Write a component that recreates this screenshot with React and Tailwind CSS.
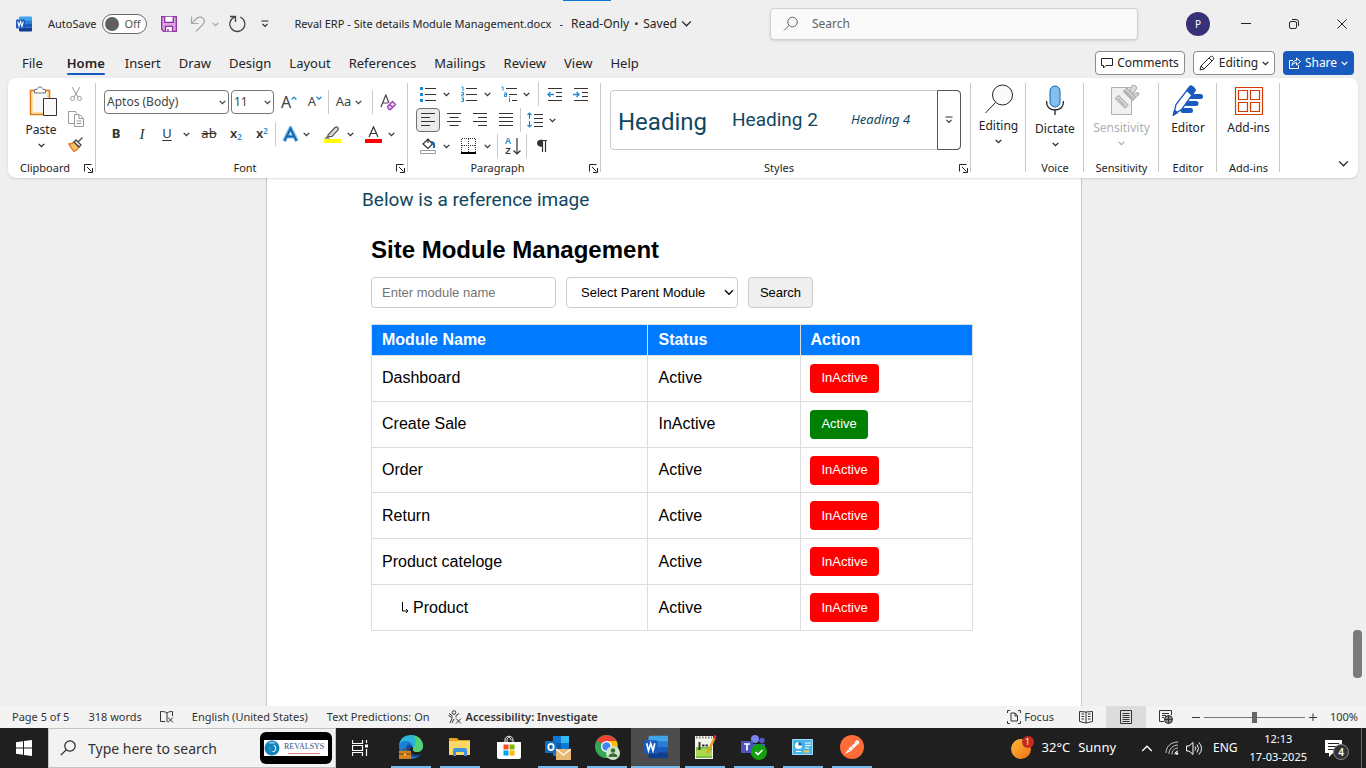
import { useState } from "react";

const TABS = [
  "Insert",
  "Draw",
  "Design",
  "Layout",
  "References",
  "Mailings",
  "Review",
  "View",
  "Help",
];

const MODULES = [
  { id: 1, name: "Dashboard", active: true },
  { id: 2, name: "Create Sale", active: false },
  { id: 3, name: "Order", active: true },
  { id: 4, name: "Return", active: true },
  { id: 5, name: "Product cateloge", active: true },
  { id: 6, name: "Product", active: true, child: true },
];

function Chevron({ className = "w-[7px]" }) {
  return (
    <svg viewBox="0 0 7 5" className={className} fill="none">
      <path
        d="M.7.9 3.5 3.7 6.3.9"
        stroke="currentColor"
        strokeWidth="1.3"
        vectorEffect="non-scaling-stroke"
      />
    </svg>
  );
}

function Icon({ size = 16, children, className = "" }) {
  return (
    <svg
      width={size}
      height={size}
      viewBox={`0 0 ${size} ${size}`}
      fill="none"
      stroke="currentColor"
      className={`shrink-0 ${className}`}
    >
      {children}
    </svg>
  );
}

function Tool({ label, className = "w-[26px]", children }) {
  return (
    <button
      aria-label={label}
      className={`flex h-6 shrink-0 items-center justify-center rounded hover:bg-gray-100 ${className}`}
    >
      {children}
    </button>
  );
}

function Drop({ label, className = "w-3" }) {
  return (
    <Tool label={`${label} options`} className={className}>
      <Chevron />
    </Tool>
  );
}

function Divider({ className = "" }) {
  return <span className={`h-6 w-px shrink-0 bg-[#c8c8c8] ${className}`} />;
}

function Group({ label, className = "", launcher, children }) {
  return (
    <section className={`relative flex shrink-0 flex-col ${className}`}>
      <div className="h-[82px]">{children}</div>
      <div className="flex h-4 items-center">
        <span className="flex-1 text-center text-[11px] leading-4">{label}</span>
        {launcher && (
          <button aria-label={`${label} settings`} className="mr-[2px] w-3">
            <Icon size={9} className="mx-auto">
              <path d="M.5 7.5v-7h7M3 3l4.5 4.5M8.5 4v4.5H4" />
            </Icon>
          </button>
        )}
      </div>
      <span className="absolute top-[5px] right-0 h-[89px] w-px bg-[#c8c8c8]" />
    </section>
  );
}

function WordLogo({ size = 16 }) {
  return (
    <svg width={size} height={size} viewBox="0 0 16 16">
      <path d="M3 1.5A1 1 0 0 1 4 .5h11a1 1 0 0 1 1 1V4.500H3z" fill="#41a5ee" />
      <path d="M3 4.300h13V8H3z" fill="#2b7cd3" />
      <path d="M3 8h13v3.700H3z" fill="#185abd" />
      <path d="M3 11.700h13v2.800a1 1 0 0 1-1 1H4a1 1 0 0 1-1-1z" fill="#103f91" />
      <rect y="3.500" width="9" height="9" rx="1" fill="#185abd" />
      <path d="m1.800 5.500 1.200 5 1.500-4.800 1.500 4.800 1.200-5" fill="none" stroke="#fff" strokeWidth="1.100" />
    </svg>
  );
}

function TitleBar() {
  const [autoSave, setAutoSave] = useState(false);

  return (
    <header className="relative flex h-12 shrink-0 items-center">
      <div className="absolute top-0 left-[563px] h-px w-12 bg-[#0b74d1]" />
      <div className="flex flex-1 items-center pl-4">
        <WordLogo />
        <label className="ml-4 flex items-center gap-[6px] text-[11px]">
          AutoSave
          <button
            role="switch"
            aria-checked={autoSave}
            onClick={() => setAutoSave(!autoSave)}
            className="flex h-5 w-[45px] items-center gap-[5px] rounded-full border border-[#6a6a6a] bg-white px-[2px] text-[11px] text-[#555]"
          >
            <span className="size-[14px] rounded-full bg-[#606060]" />
            {autoSave ? "On" : "Off"}
          </button>
        </label>
        <button aria-label="Save" className="ml-[14px]">
          <Icon className="text-[#8f2fa3]">
            <path d="M.7.7h14.600v14.600H2.700l-2-2z" fill="#dba3e2" strokeWidth="1.300" />
            <path d="M3.700.7v5.600h8.600V.7M4.500 15.300v-5h7v5" fill="#fff" strokeWidth="1.300" />
            <path d="M7 13v2.500" strokeWidth="1.500" />
          </Icon>
        </button>
        <button aria-label="Undo" className="ml-[13px] text-[#a6a6a6]">
          <Icon>
            <path d="M1.500.5v7h7M1.700 7.300 6 3C8.500.5 11.500.6 13 2.200c2 2 1.500 4.500-.5 6.600L6 15.500" strokeWidth="1.200" />
          </Icon>
        </button>
        <button aria-label="Undo history" className="ml-[6px] text-[#a6a6a6]">
          <Chevron />
        </button>
        <button aria-label="Redo" className="ml-[9px] text-[#444]">
          <Icon size={18}>
            <path d="M2 1.500h5.500V7M7.300 1.800A7.500 7.500 0 1 0 12 2" strokeWidth="1.300" />
          </Icon>
        </button>
        <button aria-label="Customize toolbar" className="ml-[15px]">
          <Icon size={8}>
            <path d="M.5 1h7M1.500 3.800 4 6.300l2.500-2.500" strokeWidth="1.200" />
          </Icon>
        </button>
        <button className="ml-[25px] flex items-center text-[11px] whitespace-pre">
          Reval ERP - Site details Module Management.docx
          <span className="px-2">-</span>
          <span className="text-[12px]">Read-Only</span>
          <span className="px-[5px]">•</span>
          <span className="text-[12px]">Saved</span>
          <Chevron className="ml-1 w-[11px]" />
        </button>
      </div>
      <label className="flex h-8 w-[368px] items-center rounded border border-[#d0d0d0] bg-[#fafafa] px-3 shadow-sm">
        <Icon className="text-[#666]">
          <circle cx="9.500" cy="6" r="4.800" />
          <path d="m6 9.500-5 5" />
        </Icon>
        <input
          placeholder="Search"
          aria-label="Search"
          className="ml-[13px] min-w-0 flex-1 bg-transparent text-[12px] outline-none placeholder:text-[#616161]"
        />
      </label>
      <div className="ml-9 flex">
        <button className="flex h-8 w-12 items-center justify-center">
          <span className="flex size-6 items-center justify-center rounded-full bg-[#373277] text-[10px] text-white">
            P
          </span>
        </button>
        <button aria-label="Minimize" className="flex w-12 items-center justify-center">
          <Icon size={10}>
            <path d="M0 4.500h10" />
          </Icon>
        </button>
        <button aria-label="Restore" className="flex w-12 items-center justify-center">
          <Icon size={10}>
            <rect x=".5" y="2.500" width="7" height="7" rx="1.500" />
            <path d="M3 .5h4a2.500 2.500 0 0 1 2.500 2.500v4" />
          </Icon>
        </button>
        <button aria-label="Close" className="flex w-12 items-center justify-center">
          <Icon size={10}>
            <path d="m.5.5 9 9m0-9-9 9" />
          </Icon>
        </button>
      </div>
    </header>
  );
}

function TabBar() {
  return (
    <nav className="flex h-[30px] shrink-0 items-center pr-3 pl-[22px] text-[13px] leading-5">
      <button className="mr-6">File</button>
      <button className="mr-5 flex flex-col font-semibold">
        <span className="mt-px leading-5">Home</span>
        <span className="h-[2px] w-full rounded bg-[#185abd]" />
      </button>
      <div className="flex flex-1 gap-[18px]">
        {TABS.map((tab) => (
          <button key={tab}>{tab}</button>
        ))}
      </div>
      <div className="flex gap-2">
        <button className="flex h-6 w-[90px] items-center justify-center gap-1 rounded border border-[#8a8a8a] bg-white text-[12px]">
          <Icon size={12}>
            <path d="M.5 1.500h11v7H5L2.500 11V8.500h-2z" />
          </Icon>
          Comments
        </button>
        <button className="flex h-6 w-[82px] items-center justify-center gap-1 rounded border border-[#8a8a8a] bg-white text-[12px]">
          <Icon>
            <path d="m1 15 1-4L11.500 1.500c1.500-1 4 1 3 3L5 14zM10 3l3 3M2 11l3 3" />
          </Icon>
          Editing
          <Chevron />
        </button>
        <button className="flex h-6 w-[71px] items-center justify-center gap-1 rounded bg-[#185abd] text-[12px] text-white">
          <Icon size={12}>
            <path d="M4 3.500H.5v8h9V8M3 8.500C3.300 5 5 3.500 7.500 3.500V1l4 3.500-4 3.500V5.700C5.500 5.700 4 6.500 3 8.500z" />
          </Icon>
          Share
          <Chevron />
        </button>
      </div>
    </nav>
  );
}

function ClipboardGroup() {
  return (
    <Group label="Clipboard" launcher className="w-[88px]">
      <div className="flex">
        <button className="flex w-[58px] flex-col items-center pt-2 pl-2 text-[12px]">
          <svg width="28" height="32" viewBox="0 0 28 32" fill="none" className="ml-1">
            <path d="M1.500 4.500h19v24h-19z" fill="#fbe3a6" stroke="#dd7a1a" strokeWidth="1.500" />
            <path d="M4 6h14v20H4z" fill="#f7f7f7" />
            <path d="M5.500 7V3.500H8C8 0 14 0 14 3.500h2.500V7z" fill="#fff" stroke="#777" />
            <path d="M14.500 12.500h13v17h-13z" fill="#fafafa" stroke="#333" />
          </svg>
          <span className="mt-1 leading-4">Paste</span>
          <Chevron className="mt-[5px] w-[7px]" />
        </button>
        <div className="flex flex-col gap-[1px] pt-1">
          <Tool label="Cut" className="w-5">
            <Icon className="text-[#999]">
              <path d="m4 1 6 10M12 1 6 11" />
              <circle cx="4.500" cy="12.500" r="2" />
              <circle cx="11.500" cy="12.500" r="2" />
            </Icon>
          </Tool>
          <Tool label="Copy" className="w-5">
            <Icon className="text-[#999]">
              <path d="M6 12.500H.5V.5h7l1 2" />
              <path d="M6.500 3.500h5l4 4v8h-9zM11 3.500v4h4M8.500 10h5M8.500 12.500h5" />
            </Icon>
          </Tool>
          <Tool label="Format painter" className="w-5">
            <Icon>
              <path d="M1 8c3 0 4-1 5-2l5 5c-1 2-2 3-5 4.300C4 13 2 11 1 8z" fill="#f8c072" stroke="#dd7a1a" strokeWidth="1.300" />
              <path d="m6 6 2-2 5 5-2 2zM10 6l4.500-4.500" stroke="#444" strokeWidth="1.300" />
            </Icon>
          </Tool>
        </div>
      </div>
    </Group>
  );
}

function ComboBox({ label, value, className }) {
  return (
    <div className={`relative h-6 ${className}`}>
      <select
        aria-label={label}
        className="block size-full appearance-none rounded border border-[#767676] bg-white pl-[2px] text-[12px]"
      >
        <option>{value}</option>
      </select>
      <Chevron className="pointer-events-none absolute top-[10px] right-[3px] w-[7px]" />
    </div>
  );
}

function FontGroup() {
  return (
    <Group label="Font" launcher className="w-[312px]">
      <div className="flex flex-col gap-2 pt-3 pl-2">
        <div className="flex items-center text-[#444]">
          <ComboBox label="Font" value="Aptos (Body)" className="w-[125px]" />
          <ComboBox label="Font size" value="11" className="ml-[2px] w-[43px]" />
          <Tool label="Increase font size" className="ml-[2px] w-[26px]">
            <span className="text-[16px]">A</span>
            <Chevron className="mb-[8px] w-[6px] rotate-180 text-[#1e8ad2]" />
          </Tool>
          <Tool label="Decrease font size">
            <span className="text-[13px]">A</span>
            <Chevron className="mb-[8px] w-[6px] text-[#1e8ad2]" />
          </Tool>
          <Divider />
          <Tool label="Change case" className="ml-[2px] w-9 gap-1">
            <span className="text-[13px]">Aa</span>
            <Chevron />
          </Tool>
          <Divider className="mx-[5px]" />
          <Tool label="Clear formatting" className="w-5">
            <Icon size={17}>
              <path d="M1 13 5.800 1 9 9M3 9h5" strokeWidth="1.200" />
              <path d="m7.500 12.500 5-5 3 3-5 5h-1.500zM9.500 10.500l3 3" stroke="#9b3fb0" strokeWidth="1.300" fill="#ecd3f1" />
            </Icon>
          </Tool>
        </div>
        <div className="flex items-center text-[13px] text-[#333]">
          <Tool label="Bold" className="w-6">
            <b>B</b>
          </Tool>
          <Tool label="Italic" className="ml-[2px] w-6 font-['Liberation_Serif',serif] text-[15px]">
            <i>I</i>
          </Tool>
          <Tool label="Underline">
            <u className="underline-offset-2">U</u>
          </Tool>
          <Drop label="Underline" />
          <Tool label="Strikethrough" className="ml-1 w-[26px]">
            <s>ab</s>
          </Tool>
          <Tool label="Subscript" className="ml-px w-[26px]">
            <span className="font-semibold">
              x<sub className="text-[8px] text-[#1e8ad2]">2</sub>
            </span>
          </Tool>
          <Tool label="Superscript">
            <span className="font-semibold">
              x<sup className="text-[8px] text-[#1e8ad2]">2</sup>
            </span>
          </Tool>
          <Divider className="mr-[2px]" />
          <Tool label="Text effects" className="w-6">
            <Icon size={17}>
              <path d="M2 15 8.500 2 15 15M5 10.500h7" stroke="#8cc5ee" strokeWidth="4" />
              <path d="M2.500 15 8.500 2.500 14.500 15M5 10.500h7" stroke="#1267b4" strokeWidth="2" />
            </Icon>
          </Tool>
          <Drop label="Text effects" className="-ml-[2px] w-3" />
          <Tool label="Highlight" className="ml-2 w-6">
            <Icon size={17}>
              <path d="m4 9 7-7.500c2-1.500 4 .5 3 2.500L8 10.500H4zM4 10.500 2 12h4" fill="#ddd" stroke="#555" strokeWidth="1.200" />
              <path d="M0 13h17v4H0z" fill="#ff0" stroke="none" />
            </Icon>
          </Tool>
          <Drop label="Highlight" />
          <Tool label="Font color" className="ml-[5px] w-6">
            <Icon size={17}>
              <path d="M4 11 8.500.8 13 11M5.500 7.500h6" strokeWidth="1.200" />
              <path d="M0 13h17v4H0z" fill="red" stroke="none" />
            </Icon>
          </Tool>
          <Drop label="Font color" />
        </div>
      </div>
    </Group>
  );
}

function ParagraphGroup() {
  return (
    <Group label="Paragraph" launcher className="w-[193px]">
      <div className="flex flex-col gap-[2px] pt-1 pl-2 text-[#333]">
        <div className="flex items-center">
          <Tool label="Bullets" className="w-6">
            <Icon>
              <path d="M5 2.500h11M5 8.500h11M5 14.500h11" />
              <path d="M0 1h3v3H0zM0 7h3v3H0zM0 13h3v3H0z" fill="#1e8ad2" stroke="none" />
            </Icon>
          </Tool>
          <Drop label="Bullets" />
          <Tool label="Numbering" className="ml-[5px] w-6">
            <Icon>
              <path d="M5 2.500h11M5 8.500h11M5 14.500h11" />
              <path d="M.5 1H2v4M.3 6.500H2.500v2H.8v1.500h2M.3 12h2.200v3.500H.3M1 13.700h1.500" stroke="#1e8ad2" />
            </Icon>
          </Tool>
          <Drop label="Numbering" />
          <Tool label="Multilevel list" className="ml-1 w-6">
            <Icon>
              <path d="M5 2.500h11M8 8.500h8M11 14.500h5" />
              <path d="M.5 1H2v3.500M3 7h2.500v3.500H3.500v-2h2M8.500 12v4M8.500 10v1" stroke="#1e8ad2" />
            </Icon>
          </Tool>
          <Drop label="Multilevel list" className="-ml-px w-3" />
          <Divider className="mr-[3px] ml-[6px]" />
          <Tool label="Decrease indent">
            <Icon>
              <path d="M1 2.500h14M9 6.500h6M9 10.500h6M1 14.500h14" />
              <path d="M7 8.500H1M3.500 6 1 8.500 3.500 11" stroke="#1e8ad2" strokeWidth="1.300" />
            </Icon>
          </Tool>
          <Tool label="Increase indent">
            <Icon>
              <path d="M1 2.500h14M9 6.500h6M9 10.500h6M1 14.500h14" />
              <path d="M0 8.500h6M3.500 6 6 8.500 3.500 11" stroke="#1e8ad2" strokeWidth="1.300" />
            </Icon>
          </Tool>
        </div>
        <div className="flex items-center">
          <Tool label="Align left" className="w-6 border border-[#707070] bg-[#ebebeb]">
            <Icon>
              <path d="M1 1.500h14M1 5.500h9M1 9.500h14M1 13.500h9" />
            </Icon>
          </Tool>
          <Tool label="Align center" className="ml-[2px] w-6">
            <Icon>
              <path d="M1 1.500h14M3.500 5.500h9M1 9.500h14M3.500 13.500h9" />
            </Icon>
          </Tool>
          <Tool label="Align right" className="ml-[2px] w-6">
            <Icon>
              <path d="M1 1.500h14M6 5.500h9M1 9.500h14M6 13.500h9" />
            </Icon>
          </Tool>
          <Tool label="Justify" className="ml-[2px] w-6">
            <Icon>
              <path d="M1 1.500h14M1 5.500h14M1 9.500h14M1 13.500h14" />
            </Icon>
          </Tool>
          <Divider className="mx-[2px]" />
          <Tool label="Line spacing" className="w-6">
            <Icon>
              <path d="M7 2.500h9M7 6.500h9M7 10.500h9M7 14.500h9" />
              <path d="M2.500 1v6M.5 3l2-2 2 2M2.500 9v6M.5 13l2 2 2-2" stroke="#1e8ad2" strokeWidth="1.200" />
            </Icon>
          </Tool>
          <Drop label="Line spacing" className="-ml-px w-3" />
        </div>
        <div className="flex items-center">
          <Tool label="Shading" className="w-6">
            <Icon>
              <path d="m3 6 5-5 4.500 5L8 10.500zM8 1v4" strokeWidth="1.200" />
              <path d="M11 4c3 0 3.500 2 3 6" stroke="#1267b4" strokeWidth="2" />
              <path d="M.5 12.500h15v3H.5z" stroke="#999" />
            </Icon>
          </Tool>
          <Drop label="Shading" />
          <Tool label="Borders" className="ml-[5px] w-6">
            <Icon>
              <path d="M1 .5h14M.5 1v13M14.500 1v13M7.500 1v13M1 7.500h14" strokeDasharray="1 1" />
              <path d="M0 15h15" strokeWidth="2" stroke="#000" />
            </Icon>
          </Tool>
          <Drop label="Borders" />
          <Divider className="mx-1" />
          <Tool label="Sort" className="w-[22px] gap-[2px]">
            <span className="flex flex-col font-['Liberation_Sans',Arial,sans-serif] text-[9px] leading-[10px] font-bold">
              <span className="text-[#1e8ad2]">A</span>
              <span>Z</span>
            </span>
            <svg width="8" height="17" viewBox="0 0 8 17" fill="none" stroke="currentColor">
              <path d="M4 0v16M.5 12.500 4 16l3.500-3.500" strokeWidth="1.200" />
            </svg>
          </Tool>
          <Divider className="mr-[2px] ml-[2px]" />
          <Tool label="Show paragraph marks">
            <Icon size={14}>
              <path d="M12 1.500H6M7.500 1v12M10.500 1v12" strokeWidth="1.200" />
              <path d="M7.500 1.200H5.500a3 3 0 0 0 0 6h2z" fill="currentColor" />
            </Icon>
          </Tool>
        </div>
      </div>
    </Group>
  );
}

function BigTool({ label, drop, className = "pt-[6px]", children }) {
  return (
    <button className={`flex w-full flex-col items-center text-[12px] ${className}`}>
      {children}
      <span className="mt-1 leading-4">{label}</span>
      {drop && <Chevron className="mt-[5px] w-[7px]" />}
    </button>
  );
}

function Ribbon() {
  return (
    <div className="z-10 mx-2 flex h-[100px] shrink-0 rounded-lg bg-white shadow">
      <ClipboardGroup />
      <FontGroup />
      <ParagraphGroup />
      <Group label="Styles" launcher className="w-[370px]">
        <div className="pt-3 pr-[10px] pl-[9px]">
          <div className="flex h-[60px] items-center rounded border border-[#c8c8c8] pl-[7px] font-[Roboto,sans-serif] text-[#0f4761]">
            <button className="w-[114px] pt-1 text-left text-[24px]">Heading</button>
            <button className="w-[119px] text-left text-[19px]">Heading 2</button>
            <button className="flex-1 text-left font-['Noto_Sans',sans-serif] text-[13px] italic">
              Heading 4
            </button>
            <button
              aria-label="More styles"
              className="-mr-px flex h-[60px] w-6 items-center justify-center rounded-r border border-[#555] text-[#333]"
            >
              <Icon size={8}>
                <path d="M.5 1h7M1.500 3.800 4 6.300l2.500-2.500" strokeWidth="1.200" />
              </Icon>
            </button>
          </div>
        </div>
      </Group>
      <Group label="" className="w-[55px]">
        <BigTool label="Editing" drop>
          <Icon size={30}>
            <circle cx="18.500" cy="11" r="10" fill="#fafafa" />
            <path d="M11.500 18.500 1.500 29" />
          </Icon>
        </BigTool>
      </Group>
      <Group label="Voice" className="w-[58px]">
        <BigTool label="Dictate" drop className="pt-[7px]">
          <Icon size={32}>
            <rect x="11" y="1" width="10" height="21" rx="5" fill="#83beec" stroke="#1267b4" />
            <path d="M7.500 16c0 6 3 9 8.500 9s8.500-3 8.500-9M16 25v5" strokeWidth="1.300" />
          </Icon>
        </BigTool>
      </Group>
      <Group label="Sensitivity" className="w-[75px]">
        <BigTool label="Sensitivity" drop className="pt-[6px] text-[#b0b0b0]">
          <Icon size={32} className="ml-1">
            <path d="M3.500 3.500h20v27h-20z" fill="#f0f0f0" />
            <path d="m7.500 14.500 3-3 9.500 9.500-3 3zM10 14.500l7 7" fill="#e4e4e4" strokeWidth="1.200" />
            <path d="m15.500 7.500 3.500-3.500 9 9-3.500 3.500zM17.500 7.500l7 7" fill="#ccc" strokeWidth="1.200" />
            <path d="m22 7 2-5q1.500-1.500 3.500 0t.5 3.500L25 10zM26.500 10.500l3-2 1.500 1.500-2.500 2.500" fill="#ddd" strokeWidth="1.200" />
          </Icon>
        </BigTool>
      </Group>
      <Group label="Editor" className="w-[58px]">
        <BigTool label="Editor">
          <Icon size={32} className="text-[#185abd]">
            <path d="M19 12.500h9.500M15 19.500h9M11 26.500h7.500" strokeWidth="5" strokeLinecap="round" />
            <path d="M1.500 31 4 20.500 17.500 3l5.500 4L10 25z" fill="#fff" strokeWidth="1.300" />
            <path d="m14.500 6.500 4-5q3 .5 5 4l-4 5.500zM1 31.500l1.500-5.500L6 28.500z" fill="#185abd" />
          </Icon>
        </BigTool>
      </Group>
      <Group label="Add-ins" className="w-[63px]">
        <BigTool label="Add-ins">
          <Icon size={32} className="text-[#d83b01]">
            <path d="M2.500 3.500h27v27h-27zM5.500 6.500h9v9h-9zM17.500 6.500h9v9h-9zM5.500 18.500h9v9h-9zM17.500 18.500h9v9h-9z" strokeWidth="1.200" />
          </Icon>
        </BigTool>
      </Group>
      <button aria-label="Collapse ribbon" className="mt-auto mr-2 mb-[10px] ml-auto px-px">
        <Chevron className="w-[11px]" />
      </button>
    </div>
  );
}

function ModuleTable() {
  const [modules, setModules] = useState(MODULES);

  const toggleModule = (id) => {
    setModules(
      modules.map((item) =>
        item.id === id ? { ...item, active: !item.active } : item
      )
    );
  };

  return (
    <table className="mt-4 h-[307px] w-full border-collapse text-left text-[16px] leading-5 text-black">
      <thead>
        <tr className="h-[31px] bg-[#007bff] text-white">
          <th className="w-[46%] border border-[#ddd] px-[10px]">Module Name</th>
          <th className="w-[153px] border border-[#ddd] px-[10px]">Status</th>
          <th className="border border-[#ddd] px-[9px]">Action</th>
        </tr>
      </thead>
      <tbody>
        {modules.map((item) => (
          <tr key={item.id}>
            <td className="border border-[#ddd] px-[10px]">
              {item.child ? (
                <span className="flex items-center gap-1 pl-[19px]">
                  <Icon size={8} className="h-3">
                    <path d="M1.500-2v9h5M5 5l2 2-2 2" />
                  </Icon>
                  {item.name}
                </span>
              ) : (
                item.name
              )}
            </td>
            <td className="border border-[#ddd] px-[10px]">
              {item.active ? "Active" : "InActive"}
            </td>
            <td className="border border-[#ddd] px-[9px]">
              <button
                onClick={() => toggleModule(item.id)}
                className={`block h-[29px] rounded px-[11px] text-[13px] text-white ${
                  item.active ? "bg-[#ff0000]" : "bg-[#008000]"
                }`}
              >
                {item.active ? "InActive" : "Active"}
              </button>
            </td>
          </tr>
        ))}
      </tbody>
    </table>
  );
}

function Document() {
  return (
    <main className="flex min-h-0 flex-1 overflow-hidden">
      <div className="mx-auto w-[816px] border-x border-[#c6c6c6] bg-white pt-2 pl-[95px]">
        <p className="font-[Roboto,sans-serif] text-[19px] leading-7 text-[#0f4761]">
          Below is a reference image
        </p>
        <div className="ml-[9px] w-[602px] pt-5 font-['Liberation_Sans',Arial,sans-serif]">
          <h2 className="text-[24px] leading-8 font-bold text-black">
            Site Module Management
          </h2>
          <form
            className="mt-[11px] flex gap-[10px] text-[13px] text-black"
            onSubmit={(e) => e.preventDefault()}
          >
            <input
              placeholder="Enter module name"
              aria-label="Module name"
              className="h-[31px] w-[185px] rounded border border-[#ccc] px-[10px] placeholder:text-[#757575]"
            />
            <div className="relative">
              <select
                aria-label="Parent module"
                className="block h-[31px] w-[172px] appearance-none rounded border border-[#ccc] bg-white pl-[14px]"
              >
                <option>Select Parent Module</option>
              </select>
              <Chevron className="pointer-events-none absolute top-3 right-1 w-[10px]" />
            </div>
            <button className="h-[31px] w-[65px] rounded border border-[#ccc] bg-[#efefef]">
              Search
            </button>
          </form>
          <ModuleTable />
        </div>
      </div>
      <div className="flex w-[18px] flex-col items-center justify-end pb-7">
        <div className="h-12 w-[9px] rounded bg-[#7a7a7a]" />
      </div>
    </main>
  );
}

function StatusBar() {
  return (
    <footer className="flex h-[22px] shrink-0 items-center bg-[#f3f3f3] pr-2 pl-3 text-[11px] text-[#333]">
      <span>Page 5 of 5</span>
      <span className="ml-[19px]">318 words</span>
      <button aria-label="Proofing" className="ml-[18px]">
        <Icon size={14}>
          <path d="M7 3v9M7 3C5 1.500 3 1.500.5 1.500v10H5M7 3c2-1.500 4-1.500 5.500-1.500V6M8 7.500l5 5m0-5-5 5" />
        </Icon>
      </button>
      <span className="ml-[18px]">English (United States)</span>
      <span className="ml-[19px]">Text Predictions: On</span>
      <button className="ml-[18px] flex items-center gap-1 font-semibold">
        <Icon size={14}>
          <circle cx="6" cy="2.500" r="1.800" />
          <path d="M1 3.500 4 5.500v3L2 13M11 3.500 8 5.500v2M.5 5.500 3 7M4 13l2-4M8 8.500l5 5m0-5-5 5" />
        </Icon>
        Accessibility: Investigate
      </button>
      <button className="ml-auto flex items-center gap-[3px]">
        <Icon size={14}>
          <path d="M3 .5H.5V3M11 .5h2.500V3M3 13.500H.5V11M11 13.500h2.500V11M4 3h4l2.500 2.500V11H4zM8 3v3h2.500" />
        </Icon>
        Focus
      </button>
      <button aria-label="Read mode" className="ml-3 flex h-full w-10 items-center justify-center">
        <Icon size={14}>
          <path d="M7 2v11M7 2 .5 1.500v10L7 13l6.500-1.500v-10zM2.500 4H5M2.500 6.500H5M2.500 9H5M9 4h2.500M9 6.500h2.500M9 9h2.500" />
        </Icon>
      </button>
      <button aria-label="Print layout" className="flex h-full w-10 items-center justify-center bg-[#dcdcdc]">
        <Icon size={14}>
          <path d="M1.500.5h11v13h-11zM3.500 3.500h7M3.500 5.500h7M3.500 7.500h7M3.500 9.500h7M3.500 11.500h7" />
        </Icon>
      </button>
      <button aria-label="Web layout" className="flex h-full w-10 items-center justify-center">
        <Icon size={14}>
          <path d="M5 11.500H.5V.5h12V5M3 3.500h7M3 5.500h4M3 7.500h2" />
          <circle cx="9.500" cy="9.500" r="4" fill="#888" stroke="#333" />
          <path d="M5.500 9.500h8M9.500 5.500v8" />
        </Icon>
      </button>
      <button aria-label="Zoom out" className="ml-[6px] w-2">
        <Icon size={8}>
          <path d="M0 4.500h8" />
        </Icon>
      </button>
      <input
        type="range"
        aria-label="Zoom"
        min="10"
        max="190"
        defaultValue="100"
        className="mx-1 h-[11px] w-[101px] appearance-none bg-[linear-gradient(#777,#777)] bg-[length:100%_1px] bg-center bg-no-repeat [&::-webkit-slider-thumb]:h-[11px] [&::-webkit-slider-thumb]:w-[5px] [&::-webkit-slider-thumb]:appearance-none [&::-webkit-slider-thumb]:bg-[#666]"
      />
      <button aria-label="Zoom in" className="w-2">
        <Icon size={8}>
          <path d="M0 4.500h8M4 .5v8" />
        </Icon>
      </button>
      <span className="ml-[13px]">100%</span>
    </footer>
  );
}

function AppButton({ label, running = true, selected, children }) {
  return (
    <button
      aria-label={label}
      className={`flex h-full w-[49px] flex-col items-center ${
        selected ? "bg-[#4c4c4c]" : ""
      }`}
    >
      <span className="flex flex-1 items-center justify-center">{children}</span>
      {running && (
        <span
          className={`h-[2px] bg-[#76b9ed] ${selected ? "w-full" : "w-10"}`}
        />
      )}
    </button>
  );
}

function AppIcon({ children }) {
  return (
    <svg width="26" height="26" viewBox="0 0 26 26" fill="none">
      {children}
    </svg>
  );
}

function PinnedApps() {
  return (
    <div className="ml-[2px] flex h-full">
      <AppButton label="Edge">
        <AppIcon>
          <path d="M1 13C1 5 6 1 13 1s12 5 12 11c0 4-3 6-6.500 6-2.500 0-4-1.500-3.500-3 .5-4-6-6-9-1z" fill="#2cb5dc" />
          <path d="M15 1.200C21 2 25 6.500 25 12c0 4-3 6-6.500 6-2.500 0-4-1.500-3.500-3 2-3 5-7 0-13.800z" fill="#52d273" />
          <path d="M1 13c0-5 4-6 7-6 4 0 7 2.500 7 6-4-3-7 3-3 7 3 3 7 3 10 1-6 7-21 4-21-8z" fill="#1a7fd6" />
          <path d="M9 11c-2.500 6 2 12 8 12 3 0 5-1 6.500-3-5 2-11 1-11.500-4 0-2 1-3 2-3.500-2-2-4-2.500-5-1.500z" fill="#0e4d9c" />
          <path d="M1 17h12v8H1z" fill="#d28220" />
          <path d="M1 20h12M5 17v-2h4v2" stroke="#7a3e05" />
          <path d="M6 19.500h2v2H6z" fill="#ffd36b" />
        </AppIcon>
      </AppButton>
      <AppButton label="File Explorer">
        <AppIcon>
          <path d="M2 4h8l2 2h11v15H2z" fill="#e3a21a" />
          <path d="M2 7h21v14H2z" fill="#ffd768" />
          <path d="M6 22v-6q0-2 2-2h10q2 0 2 2v6h-3v-4H9v4z" fill="#3b94dc" />
        </AppIcon>
      </AppButton>
      <AppButton label="Store" running={false}>
        <AppIcon>
          <path d="M9 7V5c0-5 8-5 8 0v2M11 7V5.500c0-4 4-4 4 0" stroke="#fff" strokeWidth="1" />
          <path d="M1 7h24v15q0 2-2 2H3q-2 0-2-2z" fill="#fff" />
          <path d="M7.500 9.500h5v5h-5z" fill="#f25022" />
          <path d="M13.500 9.500h5v5h-5z" fill="#7fba00" />
          <path d="M7.500 15.500h5v5h-5z" fill="#00a4ef" />
          <path d="M13.500 15.500h5v5h-5z" fill="#ffb900" />
        </AppIcon>
      </AppButton>
      <AppButton label="Outlook">
        <AppIcon>
          <path d="M8 2h16v20H8z" fill="#0f78d4" />
          <path d="M16 2h8v7h-8z" fill="#35b8f1" />
          <path d="M8 9h8v6H8z" fill="#0a5aa8" />
          <path d="M0 7h12v12H0z" fill="#0f6cbd" />
          <ellipse cx="6" cy="13" rx="2.700" ry="3.200" stroke="#fff" strokeWidth="1.800" />
          <path d="M11 15h15v11H11z" fill="#eab676" />
          <path d="m11 15 7.500 6 7.500-6" stroke="#fff" strokeWidth="1.300" />
        </AppIcon>
      </AppButton>
      <AppButton label="Chrome">
        <AppIcon>
          <circle cx="12.500" cy="12.500" r="11.500" fill="#34a853" />
          <path d="M2.500 7A11.500 11.500 0 0 1 22.500 7L12.500 12.500z" fill="#ea4335" />
          <path d="M2.500 7 8 16l4.500-5z" fill="#34a853" />
          <path d="M12.500 7h10c3 7-1 17-10 17l5-9z" fill="#fbbc04" />
          <circle cx="12.500" cy="12.500" r="5.500" fill="#fff" />
          <circle cx="12.500" cy="12.500" r="4.200" fill="#4285f4" />
          <circle cx="19" cy="19" r="7" fill="#cfe6c8" />
          <circle cx="19" cy="16.500" r="2.300" fill="#3f6b3a" />
          <path d="M14.500 23c0-5 9-5 9 0z" fill="#3f6b3a" />
        </AppIcon>
      </AppButton>
      <AppButton label="Word" selected>
        <WordLogo size={24} />
      </AppButton>
      <AppButton label="Notepad++">
        <AppIcon>
          <path d="M3 2h18v23H3z" fill="#f4f4ee" />
          <path d="M4 13h16v11H4z" fill="#7ac143" />
          <path d="M4 17q8-5 16 0v5H4z" fill="#a9d94f" />
          <path d="M4 3.500h16" stroke="#777" strokeWidth="2" strokeDasharray="1.500 1.500" />
          <path d="M7.500 8v8M10 11.500h2.500M13.500 11.500H16" stroke="#333" strokeWidth="2" />
          <path d="m15.500 19 7-15" stroke="#e2a21b" strokeWidth="2.500" />
          <path d="m22 4.500 1.500-3" stroke="#d34" strokeWidth="2.500" />
        </AppIcon>
      </AppButton>
      <AppButton label="Teams">
        <AppIcon>
          <circle cx="14" cy="5" r="4" fill="#7b83eb" />
          <circle cx="21" cy="6.500" r="2.700" fill="#5059c9" />
          <path d="M9 10h15v7q-3 6-8 6-7 0-7-7z" fill="#5059c9" />
          <path d="M0 7h12v12H0z" fill="#4b53bc" />
          <path d="M3 10h6M6 10v6.500" stroke="#fff" strokeWidth="1.700" />
          <circle cx="18" cy="18" r="8" fill="#13a10e" />
          <path d="m14.500 18 2.500 2.500 4.500-4.500" stroke="#fff" strokeWidth="1.700" />
        </AppIcon>
      </AppButton>
      <AppButton label="Control Panel">
        <AppIcon>
          <path d="M2.500 5.500h20v15h-20z" fill="#49b4ea" stroke="#9bdcfa" />
          <circle cx="8.500" cy="11.500" r="3.500" fill="#fff" />
          <path d="M8.500 11.500V8A3.500 3.500 0 0 1 12 11.500z" fill="#0f6cbd" />
          <path d="M15 9h6M15 11.500h6M15 14h4M6 17.500h5" stroke="#fff" />
          <path d="M13.500 17.500h6" stroke="#f5c84c" strokeWidth="2" />
        </AppIcon>
      </AppButton>
      <AppButton label="Postman">
        <AppIcon>
          <circle cx="13" cy="13" r="12" fill="#ff6c37" />
          <path d="m6 20 4-6 6-5 2 2-6 6z" fill="#fff" />
          <path d="m12 12 3 3M9 15l2 2" stroke="#ff6c37" strokeWidth=".7" />
          <circle cx="18" cy="8.500" r="2.200" fill="#fff" />
        </AppIcon>
      </AppButton>
    </div>
  );
}

function Taskbar() {
  return (
    <div className="flex h-10 shrink-0 items-center bg-[#1f1f1f] text-white">
      <button aria-label="Start" className="flex h-full w-12 items-center justify-center">
        <svg width="16" height="16" viewBox="0 0 16 16" fill="#fff">
          <path d="M0 2.200 7 1.200v6.300H0zM8 1l8-1v7.500H8zM0 8.500h7v6.300l-7-1zM8 8.500h8V16l-8-1z" />
        </svg>
      </button>
      <label className="flex h-full w-72 items-center border border-[#c4c4c4] bg-[#f2f2f2] pr-[3px] pl-[11px] text-[#222]">
        <Icon>
          <circle cx="10" cy="6" r="5.200" strokeWidth="1.200" />
          <path d="M6.200 9.800.8 15.200" strokeWidth="1.200" />
        </Icon>
        <input
          aria-label="Type here to search"
          placeholder="Type here to search"
          className="ml-3 w-0 flex-1 bg-transparent text-[14px] outline-none placeholder:text-[#333]"
        />
        <span className="flex h-8 w-[72px] items-center rounded-md bg-black px-1">
          <span className="flex h-4 w-full items-center overflow-hidden bg-white">
            <svg width="17" height="16" viewBox="0 0 17 16" className="shrink-0">
              <circle cx="8" cy="8" r="7.500" fill="#1482bd" />
              <path d="M4 3q4-2 8 0-4 1-8 0z" fill="#a8dcf4" />
              <path d="M5 6q1 7 5 5 3-3-1-6 4 0 3 5-4 6-7-4z" fill="#fff" />
            </svg>
            <span className="ml-[3px] flex flex-col font-['Liberation_Serif',serif]">
              <span className="text-[8px] leading-[9px] text-[#2d4f93]">REVALSYS</span>
              <span className="mx-1 mt-[2px] h-px bg-[#d98080]" />
            </span>
          </span>
        </span>
      </label>
      <button aria-label="Task view" className="flex h-full w-12 items-center justify-center">
        <Icon>
          <path d="M.5 0v3.500h10V0M.5 5.500h10v5H.5zM.5 16v-3.500h10V16M14.500 0v3M14.500 9v7" strokeWidth="1.200" />
          <path d="M13 4.500h3v3h-3z" fill="#fff" stroke="none" />
        </Icon>
      </button>
      <PinnedApps />
      <div className="ml-auto flex h-full items-center">
        <button className="flex items-center text-[13px]">
          <span className="relative mr-[9px] size-[22px]">
            <span className="absolute top-[2px] left-0 size-5 rounded-full bg-linear-to-br from-[#f8b83a] to-[#f0710f]" />
            <span className="absolute -top-[1px] left-[11px] flex size-3 items-center justify-center rounded-full bg-[#c42b1c] text-[8px]">
              1
            </span>
          </span>
          32°C<span className="ml-2">Sunny</span>
        </button>
        <button aria-label="Hidden icons" className="ml-[25px]">
          <Chevron className="w-3 rotate-180" />
        </button>
        <button aria-label="Network" className="ml-3">
          <Icon size={14}>
            <path d="M1 12C1 5.500 6 1 13 1M4 13c0-5 4-9 9-9M7 13.500c0-4 2.500-6.500 6-6.500" stroke="#ccc" />
            <path d="M10 13.500c0-2 1-3.500 3-3.500" />
            <circle cx="12" cy="12.500" r="1.300" fill="#fff" stroke="none" />
          </Icon>
        </button>
        <button aria-label="Volume" className="ml-[7px]">
          <Icon size={17}>
            <path d="M.5 6v5H3l4 3.500v-12L3 6zM9 6.500q1.500 2 0 4M11 4.500q3 4 0 8M13 2.500q5 6 0 12" />
          </Icon>
        </button>
        <span className="ml-[10px] text-[12px]">ENG</span>
        <div className="ml-3 flex flex-col text-center text-[11px] leading-[18px]">
          <span>12:13</span>
          <span>17-03-2025</span>
        </div>
        <button aria-label="Notifications" className="relative ml-[18px] size-6">
          <svg width="17" height="17" viewBox="0 0 17 17" fill="#fff">
            <path d="M0 0h17v13H8l-4 4v-4H0z" />
            <path d="M3 3.500h11M3 6.500h11M3 9.500h8" stroke="#1f1f1f" />
          </svg>
          <span className="absolute top-2 left-2 flex size-4 items-center justify-center rounded-full border border-[#888] bg-[#333] text-[10px] font-semibold">
            4
          </span>
        </button>
        <span className="mr-1 ml-3 h-full w-px bg-[#666]" />
      </div>
    </div>
  );
}

export default function App() {
  return (
    <div className="flex h-screen flex-col overflow-hidden bg-[#efefef] font-['Noto_Sans',sans-serif] text-[#242424]">
      <TitleBar />
      <TabBar />
      <Ribbon />
      <Document />
      <StatusBar />
      <Taskbar />
    </div>
  );
}
